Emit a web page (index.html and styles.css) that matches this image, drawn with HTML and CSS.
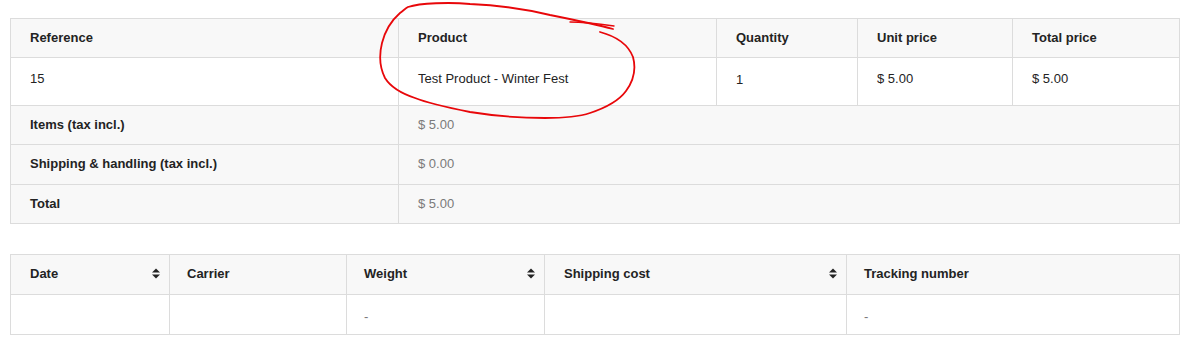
FILE: index.html
```html
<!DOCTYPE html>
<html lang="en">
<head>
<meta charset="utf-8">
<title>Order details</title>
<link rel="stylesheet" href="styles.css">
</head>
<body>
<div class="page">
  <table class="grid products">
    <colgroup>
      <col class="c-ref"><col class="c-prod"><col class="c-qty"><col class="c-unit"><col class="c-total">
    </colgroup>
    <thead>
      <tr class="head"><th>Reference</th><th>Product</th><th>Quantity</th><th>Unit price</th><th>Total price</th></tr>
    </thead>
    <tbody>
      <tr class="item"><td>15</td><td>Test Product - Winter Fest</td><td class="qty">1</td><td>$ 5.00</td><td>$ 5.00</td></tr>
      <tr class="sum"><th>Items (tax incl.)</th><td colspan="4">$ 5.00</td></tr>
      <tr class="sum tall"><th>Shipping &amp; handling (tax incl.)</th><td colspan="4">$ 0.00</td></tr>
      <tr class="sum"><th>Total</th><td colspan="4">$ 5.00</td></tr>
    </tbody>
  </table>

  <table class="grid shipping">
    <colgroup>
      <col class="s-date"><col class="s-car"><col class="s-wt"><col class="s-cost"><col class="s-track">
    </colgroup>
    <thead>
      <tr class="head">
        <th class="first"><div class="sortable"><span>Date</span><svg class="sort" viewBox="0 0 8 11" width="8" height="11"><path d="M0 4.5 L4 0.5 L8 4.5 Z M0 6.5 L8 6.5 L4 10.5 Z"/></svg></div></th>
        <th>Carrier</th>
        <th><div class="sortable"><span>Weight</span><svg class="sort" viewBox="0 0 8 11" width="8" height="11"><path d="M0 4.5 L4 0.5 L8 4.5 Z M0 6.5 L8 6.5 L4 10.5 Z"/></svg></div></th>
        <th class="cost"><div class="sortable"><span>Shipping cost</span><svg class="sort" viewBox="0 0 8 11" width="8" height="11"><path d="M0 4.5 L4 0.5 L8 4.5 Z M0 6.5 L8 6.5 L4 10.5 Z"/></svg></div></th>
        <th>Tracking number</th>
      </tr>
    </thead>
    <tbody>
      <tr class="row"><td></td><td></td><td class="dash">-</td><td></td><td class="dash">-</td></tr>
    </tbody>
  </table>

  <svg class="scribble" width="1192" height="346" viewBox="0 0 1192 346" fill="none">
    <path d="M408 7 C420 3 450 2 470 4 C495 5 525 9 550 15 C570 19 595 24 613 29 M600 32 C615 36 628 44 633 57 C636 68 634 80 626 91 C618 102 605 108 590 113 C578 117 565 118 545 118 C520 118 495 116 470 112 C450 108 430 104 415 98 C400 93 390 86 385 78 C380 68 379 55 382 43 C385 31 392 20 400 13 C404 10 406 8 408 7"/>
    <path class="tail" d="M570 22 C585 22 600 24 614 26"/>
  </svg>
</div>
</body>
</html>
```

FILE: styles.css
```css
html, body {
  margin: 0;
  padding: 0;
  background: #ffffff;
}

.page {
  position: relative;
  padding: 18px 12px 0 10px;
  font-family: "Liberation Sans", Arial, Helvetica, sans-serif;
  font-size: 13px;
  color: #232323;
}

.grid {
  border-collapse: collapse;
  table-layout: fixed;
  width: 1170px;
}

.grid th,
.grid td {
  border: 1px solid #dcdcdc;
  padding: 0 0 0 19px;
  text-align: left;
  vertical-align: middle;
}

.grid th {
  font-weight: bold;
  color: #232323;
}

.head {
  background: #f8f8f8;
}

.products .head th {
  height: 36px;
  padding-bottom: 2px;
}

.c-ref { width: 388px; }
.c-prod { width: 318px; }
.c-qty { width: 141px; }
.c-unit { width: 155px; }
.c-total { width: 167px; }

.item td {
  height: 41px;
  background: #ffffff;
  color: #232323;
  padding-bottom: 6px;
}

.item td.qty {
  height: 43px;
  padding-bottom: 4px;
}

.sum {
  background: #f8f8f8;
}

.sum th,
.sum td {
  height: 36px;
  padding-bottom: 2px;
}

.sum.tall th,
.sum.tall td {
  height: 37px;
}

.sum td {
  color: #7a7a7a;
}

.shipping {
  margin-top: 30px;
}

.shipping th,
.shipping td {
  padding-left: 17px;
}

.shipping th.first {
  padding-left: 19px;
}

.shipping th.cost {
  padding-left: 19px;
}

.shipping .head th {
  height: 37px;
  padding-right: 9px;
  padding-bottom: 2px;
}

.s-date { width: 159px; }
.s-car { width: 177px; }
.s-wt { width: 198px; }
.s-cost { width: 302px; }
.s-track { width: 333px; }

.sortable {
  display: flex;
  align-items: center;
  justify-content: space-between;
}

.sort {
  fill: #232323;
  flex: none;
}

.row td {
  height: 36px;
  background: #ffffff;
  padding-top: 3px;
}

.row td.dash {
  color: #7a7a7a;
}

.scribble {
  position: absolute;
  left: 0;
  top: 0;
  stroke: #e8070a;
  stroke-width: 1.8;
  stroke-linecap: round;
  stroke-linejoin: round;
  pointer-events: none;
}

.scribble .tail {
  stroke-width: 1.4;
}
```
